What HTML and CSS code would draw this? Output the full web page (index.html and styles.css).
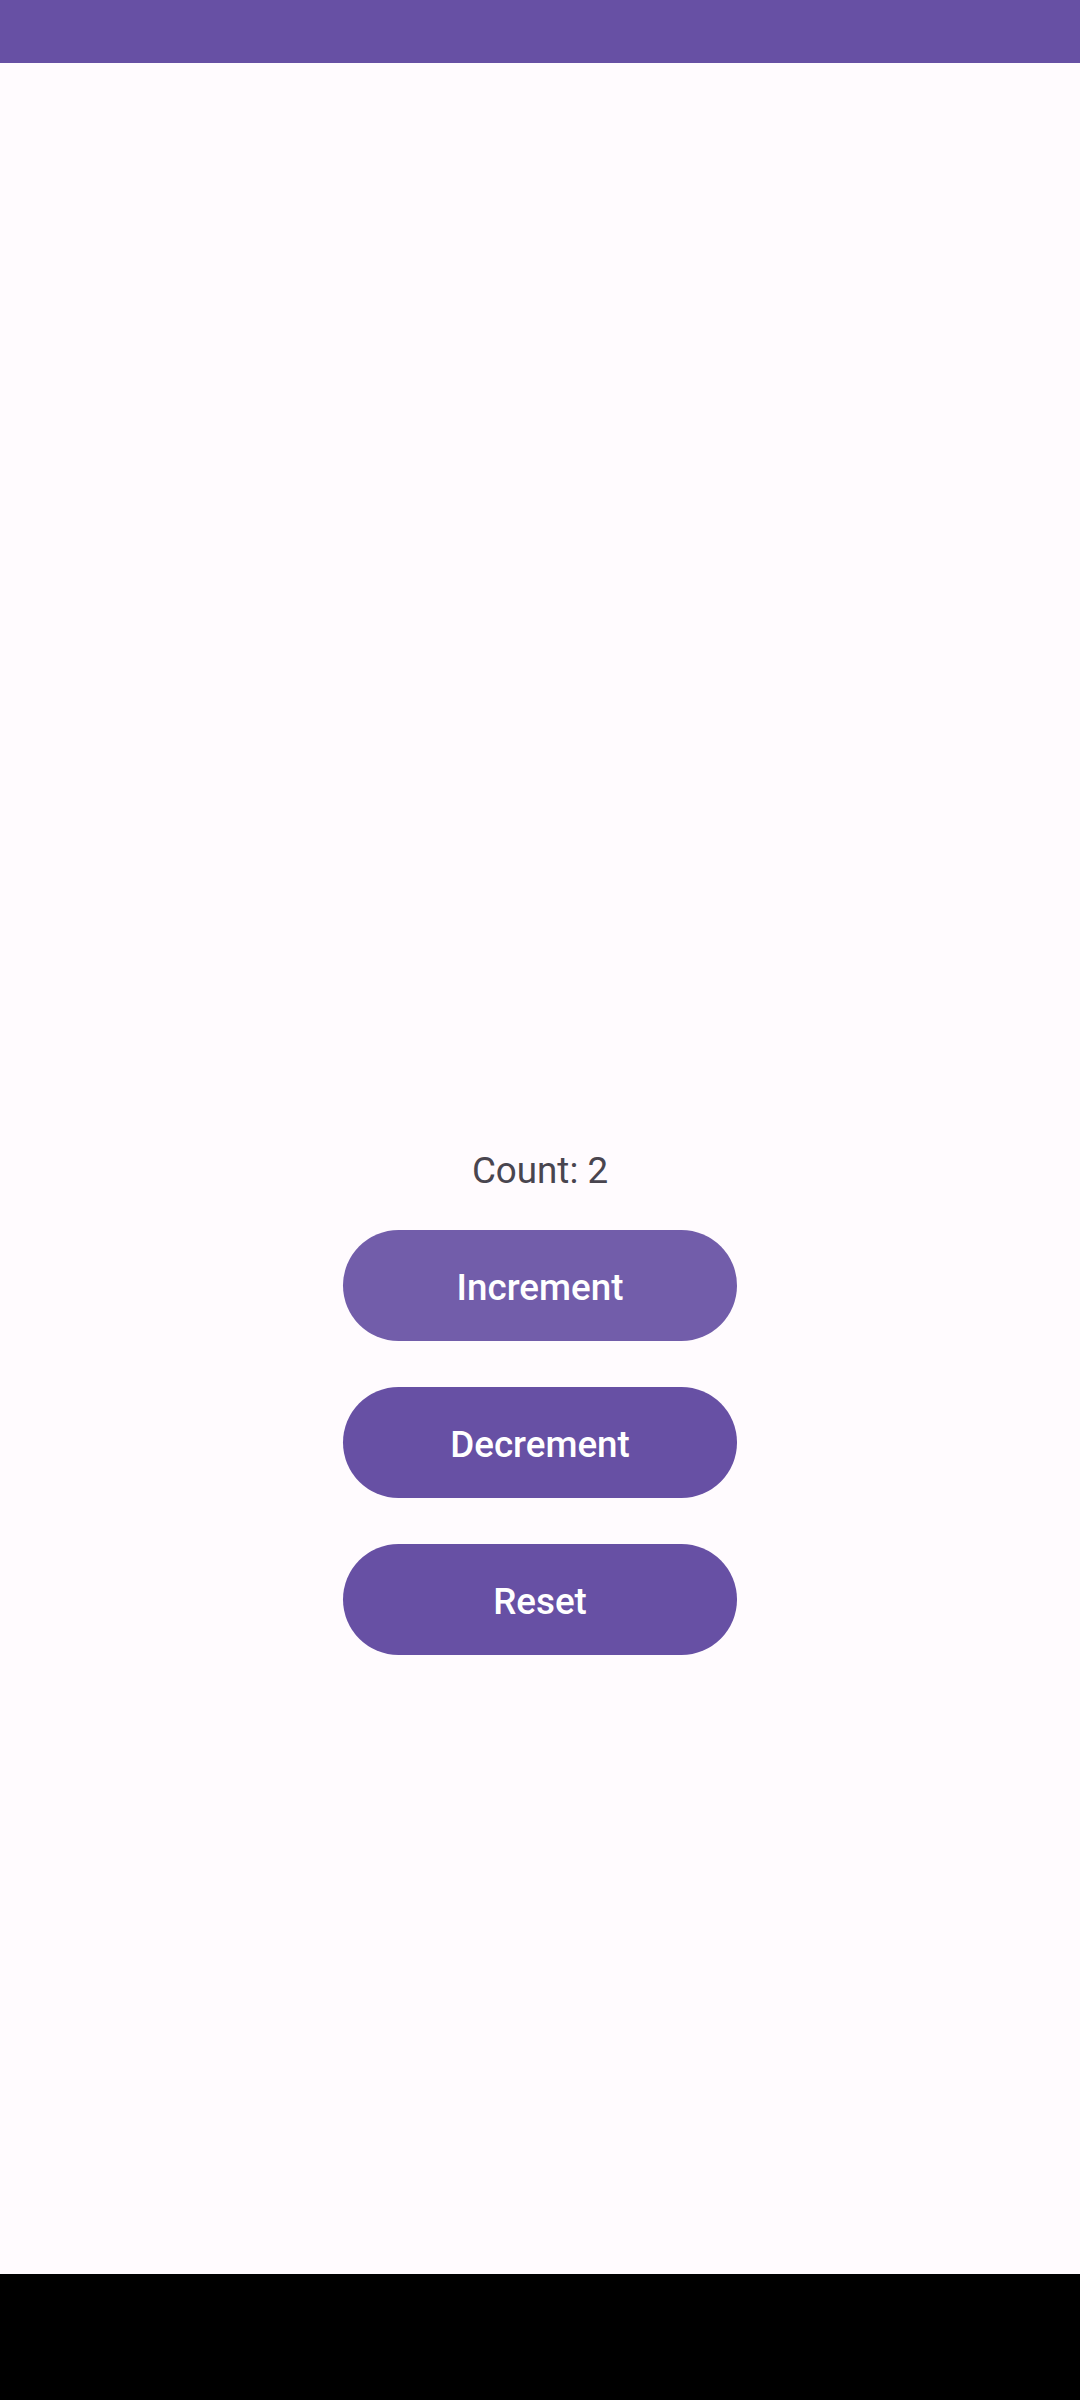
FILE: index.html
```html
<!DOCTYPE html>
<html lang="en">
<head>
<meta charset="utf-8">
<title>Counter</title>
<link rel="stylesheet" href="styles.css">
</head>
<body>
<div class="screen">
  <div class="status-bar"></div>
  <main class="content">
    <div class="count">Count: 2</div>
    <div class="buttons">
      <button class="btn btn-pressed">Increment</button>
      <button class="btn">Decrement</button>
      <button class="btn">Reset</button>
    </div>
  </main>
  <div class="nav-bar"></div>
</div>
</body>
</html>
```
FILE: styles.css
```css
html, body {
  margin: 0;
  padding: 0;
}
body {
  width: 1080px;
  height: 2400px;
  background: #FFFBFE;
  font-family: Roboto, "Liberation Sans", sans-serif;
}
.screen {
  display: flex;
  flex-direction: column;
  height: 2400px;
}
.status-bar {
  height: 63px;
  background: #6750A4;
  flex: none;
}
.content {
  flex: 1;
  display: flex;
  flex-direction: column;
  align-items: center;
  padding-top: 1086px;
  box-sizing: border-box;
}
.count {
  font-size: 36.75px;
  line-height: 44px;
  color: #49454F;
  margin-bottom: 37px;
}
.buttons {
  display: flex;
  flex-direction: column;
  gap: 46px;
}
.btn {
  width: 394px;
  height: 111px;
  border: none;
  border-radius: 56px;
  background: #6750A4;
  color: #FFFFFF;
  font-family: Roboto, "Liberation Sans", sans-serif;
  font-size: 36.75px;
  font-weight: 500;
  line-height: 44px;
  padding: 5px 0 0 0;
  display: flex;
  align-items: center;
  justify-content: center;
}
.btn-pressed {
  background: #725DAA;
}
.nav-bar {
  height: 126px;
  background: #000000;
  flex: none;
}
```
